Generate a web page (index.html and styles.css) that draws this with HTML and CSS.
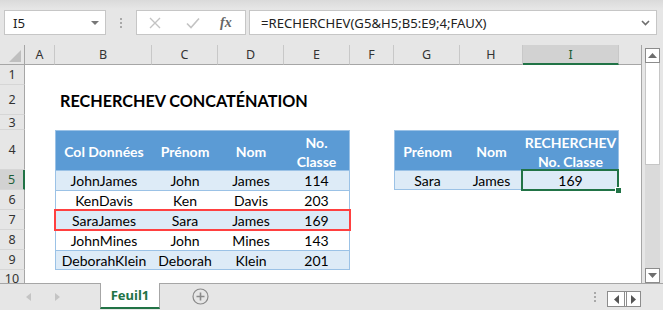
FILE: index.html
```html
<!DOCTYPE html>
<html lang="fr">
<head>
    <meta charset="UTF-8">
    <title>RECHERCHEV CONCATÉNATION</title>
    <link rel="stylesheet" href="styles.css">
</head>
<body>
    <div class="excel">
        <div class="toolbar">
            <div class="namebox"><span>I5</span><span class="dd"></span></div>
            <div class="grip"><i></i><i></i><i></i></div>
            <div class="fxbox">
                <svg class="ic-cancel" width="12" height="12" viewBox="0 0 12 12"><path d="M1 1L11 11M11 1L1 11" stroke="#c3c3c3" stroke-width="1.4" fill="none"/></svg>
                <svg class="ic-ok" width="14" height="12" viewBox="0 0 14 12"><path d="M1 6.5L5 10.5L13 1.5" stroke="#c3c3c3" stroke-width="1.6" fill="none"/></svg>
                <span class="fx">fx</span>
            </div>
            <div class="formula">
                <span>=RECHERCHEV(G5&amp;H5;B5:E9;4;FAUX)</span>
                <svg width="9" height="6" viewBox="0 0 9 6"><path d="M1 1L4.5 4.5L8 1" stroke="#6e6e6e" stroke-width="1.6" fill="none"/></svg>
            </div>
        </div>

        <div class="workarea">
            <div class="sheet">
                <div class="ch corner"><svg width="12" height="12" viewBox="0 0 12 12"><path d="M12 0V12H0Z" fill="#bfbfbf"/></svg></div>
                <div class="ch">A</div>
                <div class="ch">B</div>
                <div class="ch">C</div>
                <div class="ch">D</div>
                <div class="ch">E</div>
                <div class="ch">F</div>
                <div class="ch">G</div>
                <div class="ch">H</div>
                <div class="ch sel">I</div>
                <div class="ch last"></div>

                <div class="rh r1">1</div>
                <div class="rh r2">2</div>
                <div class="rh r3">3</div>
                <div class="rh r4">4</div>
                <div class="rh r5 sel">5</div>
                <div class="rh r6">6</div>
                <div class="rh r7">7</div>
                <div class="rh r8">8</div>
                <div class="rh r9">9</div>
                <div class="rh r10">10</div>

                <div class="title r2">RECHERCHEV CONCATÉNATION</div>

                <!-- table 1 -->
                <div class="c th l r4 cB">Col Données</div>
                <div class="c th r4 cC">Prénom</div>
                <div class="c th r4 cD">Nom</div>
                <div class="c th rt r4 cE">No.<br>Classe</div>

                <div class="c td band l r5 cB">JohnJames</div>
                <div class="c td band r5 cC">John</div>
                <div class="c td band r5 cD">James</div>
                <div class="c td band rt r5 cE">114</div>

                <div class="c td l r6 cB">KenDavis</div>
                <div class="c td r6 cC">Ken</div>
                <div class="c td r6 cD">Davis</div>
                <div class="c td rt r6 cE">203</div>

                <div class="c td band l r7 cB">SaraJames</div>
                <div class="c td band r7 cC">Sara</div>
                <div class="c td band r7 cD">James</div>
                <div class="c td band rt r7 cE">169</div>

                <div class="c td l r8 cB">JohnMines</div>
                <div class="c td r8 cC">John</div>
                <div class="c td r8 cD">Mines</div>
                <div class="c td rt r8 cE">143</div>

                <div class="c td band l b r9 cB">DeborahKlein</div>
                <div class="c td band b r9 cC">Deborah</div>
                <div class="c td band b r9 cD">Klein</div>
                <div class="c td band rt b r9 cE">201</div>

                <!-- table 2 -->
                <div class="c th l r4 cG">Prénom</div>
                <div class="c th r4 cH">Nom</div>
                <div class="c th rt r4 cI">RECHERCHEV<br>No. Classe</div>

                <div class="c td band l b r5 cG">Sara</div>
                <div class="c td band b r5 cH">James</div>
                <div class="c td band rt b r5 cI">169</div>

                <div class="mark r7"></div>
                <div class="cursor r5 cI"><span class="handle"></span></div>
            </div>

            <div class="vscroll">
                <div class="sbtn"><svg width="9" height="5" viewBox="0 0 9 5"><path d="M0 5L4.5 0L9 5Z" fill="#6e6e6e"/></svg></div>
                <div class="thumb"></div>
                <div class="track"></div>
                <div class="sbtn"><svg width="9" height="5" viewBox="0 0 9 5"><path d="M0 0L4.5 5L9 0Z" fill="#6e6e6e"/></svg></div>
            </div>
        </div>

        <div class="tabbar">
            <div class="navs">
                <svg width="5" height="8" viewBox="0 0 5 8"><path d="M5 0V8L0 4Z" fill="#c4c4c4"/></svg>
                <svg width="5" height="8" viewBox="0 0 5 8"><path d="M0 0V8L5 4Z" fill="#c4c4c4"/></svg>
            </div>
            <div class="tab">Feuil1</div>
            <div class="addsheet">
                <svg width="17" height="17" viewBox="0 0 17 17"><circle cx="8.5" cy="8.5" r="7.5" stroke="#8a8a8a" stroke-width="1.2" fill="none"/><path d="M8.5 4.5V12.5M4.5 8.5H12.5" stroke="#8a8a8a" stroke-width="1.6"/></svg>
            </div>
            <div class="spacer"></div>
            <div class="grip small"><i></i><i></i><i></i></div>
            <div class="hnav">
                <div class="hbtn"><svg width="5" height="9" viewBox="0 0 5 9"><path d="M5 0V9L0 4.5Z" fill="#555"/></svg></div>
                <div class="hbtn"><svg width="5" height="9" viewBox="0 0 5 9"><path d="M0 0V9L5 4.5Z" fill="#555"/></svg></div>
            </div>
        </div>
    </div>
</body>
</html>
```

FILE: styles.css
```css
* {
    box-sizing: border-box;
}
body {
    margin: 0;
    font-family: "Lato", "Liberation Sans", sans-serif;
    background-color: #e6e6e6;
}
.excel {
    width: 663px;
    height: 310px;
    display: flex;
    flex-direction: column;
    overflow: hidden;
    background: #e6e6e6;
}

/* formula bar */
.toolbar {
    height: 45px;
    flex: none;
    display: flex;
    align-items: flex-start;
    padding: 10px 6px 0 4px;
    background: linear-gradient(#dadada, #e6e6e6 9px);
}
.namebox {
    width: 102px;
    height: 25px;
    background: #fff;
    border: 1px solid #c6c6c6;
    display: flex;
    align-items: center;
    justify-content: space-between;
    padding: 0 6px 0 8px;
    font-family: "Noto Sans", sans-serif;
    font-size: 13.2px;
    color: #222;
}
.dd {
    width: 0;
    height: 0;
    border-left: 4px solid transparent;
    border-right: 4px solid transparent;
    border-top: 4px solid #777;
}
.grip {
    width: 30px;
    height: 25px;
    display: flex;
    flex-direction: column;
    align-items: center;
    justify-content: center;
    gap: 2px;
}
.grip i {
    display: block;
    width: 2px;
    height: 2px;
    background: #a8a8a8;
}
.fxbox {
    width: 110px;
    height: 25px;
    background: #fff;
    border: 1px solid #c6c6c6;
    display: flex;
    align-items: center;
    padding-left: 12px;
}
.ic-ok {
    margin-left: 25px;
}
.fx {
    margin-left: 20px;
    font-family: "Liberation Serif", serif;
    font-style: italic;
    font-weight: bold;
    font-size: 14px;
    color: #666;
}
.formula {
    flex: 1;
    height: 25px;
    margin-left: 3px;
    background: #fff;
    border: 1px solid #c6c6c6;
    display: flex;
    align-items: center;
    justify-content: space-between;
    padding: 0 6px 0 11px;
    font-family: "Noto Sans", sans-serif;
    font-size: 13.1px;
    color: #222;
}

/* sheet */
.workarea {
    display: flex;
    height: 238px;
    flex: none;
}
.sheet {
    width: 642px;
    border-right: 1px solid #a6a6a6;
    background: #fff;
    display: grid;
    grid-template-columns: 25px 30px 97px 66px 66px 66px 44px 66px 63px 96px 22px;
    grid-template-rows: 20px 20px 30px 15px 40px repeat(5, 20px) 13px;
}
.ch {
    grid-row: 1;
    background: #e6e6e6;
    border-right: 1px solid #c8c8c8;
    border-bottom: 1px solid #a6a6a6;
    display: flex;
    align-items: center;
    justify-content: center;
    font-family: "Noto Sans", sans-serif;
    font-size: 12.5px;
    color: #333;
}
.ch.corner {
    justify-content: flex-end;
    align-items: flex-end;
    padding: 0 3px 2px 0;
    border-right-color: #a6a6a6;
}
.ch.last {
    border-right: none;
}
.ch.sel {
    background: #d2d2d2;
    border-bottom: 2px solid #217346;
    color: #1e5e38;
}
.rh {
    grid-column: 1;
    background: #e6e6e6;
    border-right: 1px solid #a6a6a6;
    border-bottom: 1px solid #d6d6d6;
    display: flex;
    align-items: center;
    justify-content: center;
    font-family: "Noto Sans", sans-serif;
    font-size: 12.5px;
    color: #333;
    overflow: hidden;
}
.rh.r10 {
    align-items: flex-start;
    line-height: 18px;
    border-bottom: none;
}
.rh.sel {
    background: #d2d2d2;
    border-right: 2px solid #217346;
    color: #1e5e38;
}

.r1 { grid-row: 2; }
.r2 { grid-row: 3; }
.r3 { grid-row: 4; }
.r4 { grid-row: 5; }
.r5 { grid-row: 6; }
.r6 { grid-row: 7; }
.r7 { grid-row: 8; }
.r8 { grid-row: 9; }
.r9 { grid-row: 10; }
.r10 { grid-row: 11; }
.cB { grid-column: 3; }
.cC { grid-column: 4; }
.cD { grid-column: 5; }
.cE { grid-column: 6; }
.cG { grid-column: 8; }
.cH { grid-column: 9; }
.cI { grid-column: 10; }

.title {
    grid-column: 3 / 9;
    display: flex;
    align-items: flex-end;
    padding: 0 0 5px 5px;
    font-size: 16.2px;
    font-weight: bold;
    color: #000;
    white-space: nowrap;
}
.c {
    display: flex;
    align-items: center;
    justify-content: center;
    text-align: center;
    font-size: 14px;
    color: #000;
    white-space: nowrap;
}
.th {
    background: #5b9bd5;
    color: #fff;
    font-weight: bold;
    border-top: 1px solid #9bc2e6;
    line-height: 19px;
    padding-top: 2px;
}
.td {
    border-top: 1px solid #9bc2e6;
}
.band {
    background: #ddebf7;
}
.l {
    border-left: 1px solid #9bc2e6;
}
.rt {
    border-right: 1px solid #9bc2e6;
}
.b {
    border-bottom: 1px solid #9bc2e6;
}
.mark {
    grid-column: 3 / 7;
    margin: -1px;
    border: 2px solid #ff4040;
}
.cursor {
    margin: -1px 0 -1px -2px;
    border: 2px solid #217346;
    position: relative;
}
.handle {
    position: absolute;
    right: -5px;
    bottom: -5px;
    width: 7px;
    height: 7px;
    background: #217346;
    border: 1px solid #fff;
}

/* vertical scrollbar */
.vscroll {
    width: 21px;
    display: flex;
    flex-direction: column;
    padding: 3px 3px 0 3px;
}
.sbtn {
    height: 15px;
    flex: none;
    background: #fff;
    border: 1px solid #8c8c8c;
    display: flex;
    align-items: center;
    justify-content: center;
}
.thumb {
    height: 102px;
    flex: none;
    background: #fff;
    border-left: 1px solid #c6c6c6;
    border-right: 1px solid #c6c6c6;
    border-bottom: 1px solid #c6c6c6;
}
.track {
    flex: 1;
    background: #dadada;
}

/* sheet tabs */
.tabbar {
    flex: 1;
    display: flex;
    align-items: flex-start;
    border-top: 1px solid #a6a6a6;
}
.navs {
    width: 100px;
    height: 25px;
    display: flex;
    align-items: center;
    gap: 24px;
    padding-left: 26px;
}
.tab {
    width: 60px;
    height: 26px;
    margin-top: -1px;
    background: #fff;
    border-left: 1px solid #a6a6a6;
    border-right: 1px solid #a6a6a6;
    border-bottom: 2px solid #217346;
    display: flex;
    align-items: center;
    justify-content: center;
    font-family: "Noto Sans", sans-serif;
    font-size: 13px;
    font-weight: bold;
    color: #217346;
}
.addsheet {
    height: 25px;
    margin-left: 32px;
    display: flex;
    align-items: center;
}
.spacer {
    flex: 1;
}
.grip.small {
    width: 8px;
    height: 25px;
    gap: 2px;
}
.hnav {
    display: flex;
    margin: 7px 22px 0 8px;
    border: 1px solid #8c8c8c;
    background: #fff;
}
.hbtn {
    width: 16px;
    height: 14px;
    display: flex;
    align-items: center;
    justify-content: center;
}
.hbtn + .hbtn {
    border-left: 3px double #8c8c8c;
}
```
